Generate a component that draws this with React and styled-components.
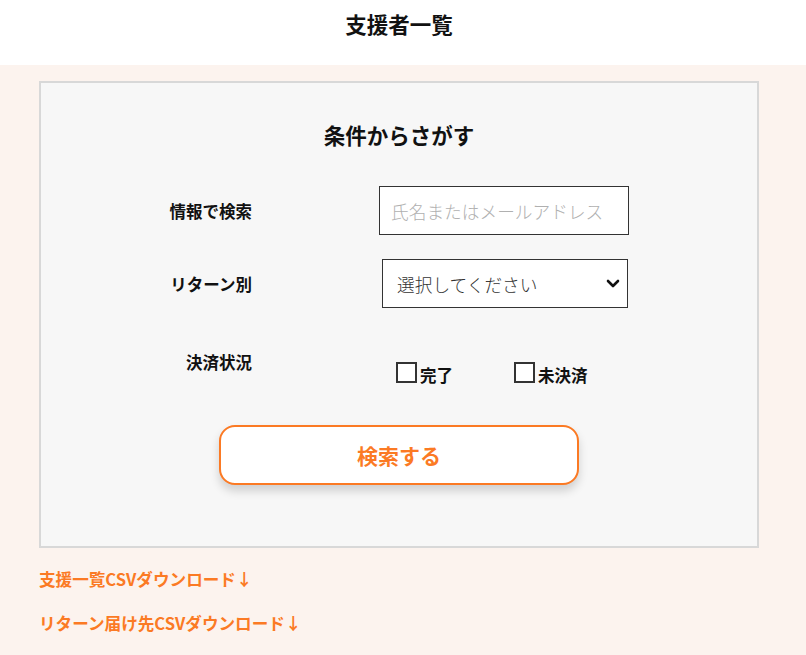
import React from "react";
import styled, { createGlobalStyle } from "styled-components";

const GlobalStyle = createGlobalStyle`
  html, body {
    margin: 0;
    padding: 0;
  }
  body {
    font-family: "Noto Sans CJK JP", "Noto Sans", sans-serif;
    color: #111;
    background: #fcf3ee;
  }
`;

export default function App() {
  return (
    <Root>
      <GlobalStyle />
      <Header>
        <PageTitle>支援者一覧</PageTitle>
      </Header>
      <Main>
        <SearchCard>
          <CardTitle>条件からさがす</CardTitle>
          <Form>
            <Row>
              <Label>情報で検索</Label>
              <TextInput placeholder="氏名またはメールアドレス" />
            </Row>
            <Row>
              <Label>リターン別</Label>
              <SelectWrap>
                <Select defaultValue="">
                  <option value="">選択してください</option>
                </Select>
                <Chevron width="14" height="9" viewBox="0 0 14 9">
                  <path
                    d="M2 2l5 5 5-5"
                    fill="none"
                    stroke="#111"
                    strokeWidth="2.6"
                    strokeLinecap="round"
                    strokeLinejoin="round"
                  />
                </Chevron>
              </SelectWrap>
            </Row>
            <Row $top>
              <Label>決済状況</Label>
              <Checks>
                <CheckLabel>
                  <Check type="checkbox" />
                  完了
                </CheckLabel>
                <CheckLabel>
                  <Check type="checkbox" />
                  未決済
                </CheckLabel>
              </Checks>
            </Row>
          </Form>
          <SearchButton>検索する</SearchButton>
        </SearchCard>
        <Links>
          <DownloadLink href="#">支援一覧CSVダウンロード↓</DownloadLink>
          <DownloadLink href="#">リターン届け先CSVダウンロード↓</DownloadLink>
        </Links>
      </Main>
    </Root>
  );
}

const Root = styled.div`
  min-height: 100vh;
  background: #fcf3ee;
`;

const Header = styled.header`
  height: 65px;
  background: #fff;
  display: flex;
  justify-content: center;
  padding-right: 8px;
`;

const PageTitle = styled.h1`
  margin: 8px 0 0;
  font-size: 21.5px;
  line-height: 32px;
  font-weight: 700;
  color: #111;
`;

const Main = styled.main`
  padding: 16px 0 30px 39px;
`;

const SearchCard = styled.section`
  width: 720px;
  box-sizing: border-box;
  border: 2px solid #d8d8d8;
  background: #f7f7f7;
  padding: 37px 0 61px;
  display: flex;
  flex-direction: column;
  align-items: center;
`;

const CardTitle = styled.h2`
  margin: 0;
  font-size: 21.5px;
  line-height: 30px;
  font-weight: 700;
`;

const Form = styled.div`
  margin-top: 36px;
  width: 100%;
  display: flex;
  flex-direction: column;
  gap: 24px;
`;

const Row = styled.div`
  display: grid;
  grid-template-columns: 211px 1fr;
  column-gap: 127px;
  align-items: ${(p) => (p.$top ? "start" : "center")};
  margin-top: ${(p) => (p.$top ? "19px" : "0")};
`;

const Label = styled.div`
  text-align: right;
  font-size: 16.5px;
  line-height: 22px;
  font-weight: 700;
  color: #111;
`;

const TextInput = styled.input`
  width: 250px;
  height: 49px;
  box-sizing: border-box;
  border: 1px solid #333;
  background: #fff;
  padding: 0 11px;
  font-family: inherit;
  font-size: 17.7px;
  font-weight: 300;
  color: #333;
  outline: none;
  &::placeholder {
    color: #b0b0b0;
  }
`;

const SelectWrap = styled.div`
  position: relative;
  width: 246px;
  margin-left: 3px;
`;

const Select = styled.select`
  appearance: none;
  width: 100%;
  height: 49px;
  box-sizing: border-box;
  border: 1px solid #333;
  border-radius: 0;
  background: #fff;
  padding: 0 14px;
  font-family: inherit;
  font-size: 17.7px;
  font-weight: 300;
  color: #333;
  outline: none;
`;

const Chevron = styled.svg`
  position: absolute;
  right: 8px;
  top: 20px;
  pointer-events: none;
`;

const Checks = styled.div`
  margin-top: 13px;
  margin-left: 17px;
  display: flex;
  gap: 61px;
`;

const CheckLabel = styled.label`
  display: flex;
  align-items: center;
  gap: 3px;
  font-size: 16.5px;
  line-height: 22px;
  font-weight: 700;
  color: #111;
`;

const Check = styled.input`
  appearance: none;
  margin: 0;
  width: 21px;
  height: 21px;
  box-sizing: border-box;
  border: 2px solid #333;
  background: #fff;
  position: relative;
  top: -3px;
`;

const SearchButton = styled.button`
  margin-top: 39px;
  width: 360px;
  height: 60px;
  box-sizing: border-box;
  border: 2px solid #fb7a24;
  border-radius: 16px;
  background: #fff;
  color: #fb7a24;
  font-family: inherit;
  font-size: 21px;
  font-weight: 700;
  box-shadow: 0 6px 10px rgba(0, 0, 0, 0.16);
  cursor: pointer;
`;

const Links = styled.div`
  margin-top: 20px;
  display: flex;
  flex-direction: column;
  align-items: flex-start;
  gap: 22px;
`;

const DownloadLink = styled.a`
  font-size: 16.6px;
  line-height: 22px;
  font-weight: 700;
  color: #fb7a24;
  text-decoration: none;
`;
